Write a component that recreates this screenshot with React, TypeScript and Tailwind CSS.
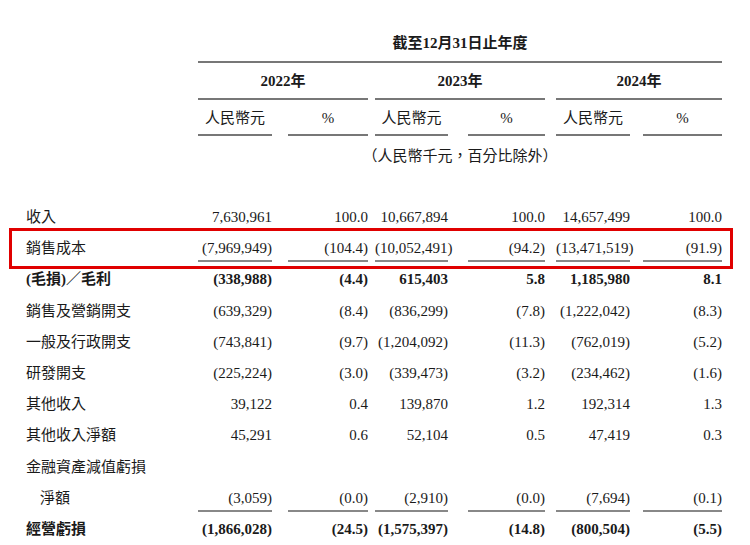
const COLS = [
  "ml-0 w-[74px]",
  "ml-[16px] w-[80px]",
  "ml-[7px] w-[73px]",
  "ml-[20px] w-[77px]",
  "ml-[11px] w-[74px]",
  "ml-[13px] w-[79px]",
];

type Row = { label: string; vals?: string[]; bold?: boolean; line?: boolean; indent?: boolean };

const ROWS: Row[] = [
  { label: "收入", vals: ["7,630,961", "100.0", "10,667,894", "100.0", "14,657,499", "100.0"] },
  { label: "銷售成本", vals: ["(7,969,949)", "(104.4)", "(10,052,491)", "(94.2)", "(13,471,519)", "(91.9)"], line: true },
  { label: "(毛損)／毛利", vals: ["(338,988)", "(4.4)", "615,403", "5.8", "1,185,980", "8.1"], bold: true },
  { label: "銷售及營銷開支", vals: ["(639,329)", "(8.4)", "(836,299)", "(7.8)", "(1,222,042)", "(8.3)"] },
  { label: "一般及行政開支", vals: ["(743,841)", "(9.7)", "(1,204,092)", "(11.3)", "(762,019)", "(5.2)"] },
  { label: "研發開支", vals: ["(225,224)", "(3.0)", "(339,473)", "(3.2)", "(234,462)", "(1.6)"] },
  { label: "其他收入", vals: ["39,122", "0.4", "139,870", "1.2", "192,314", "1.3"] },
  { label: "其他收入淨額", vals: ["45,291", "0.6", "52,104", "0.5", "47,419", "0.3"] },
  { label: "金融資產減值虧損" },
  { label: "淨額", vals: ["(3,059)", "(0.0)", "(2,910)", "(0.0)", "(7,694)", "(0.1)"], line: true, indent: true },
  { label: "經營虧損", vals: ["(1,866,028)", "(24.5)", "(1,575,397)", "(14.8)", "(800,504)", "(5.5)"], bold: true },
];

export default function App() {
  return (
    <div
      className="w-[750px] h-[545px] bg-white text-[#1a1a1a] text-[15px] relative overflow-hidden"
      style={{ fontFamily: '"Liberation Serif", "Noto Sans CJK TC", serif' }}
    >
      <div className="pl-[198px] pt-[33px] w-[722px]">
        <div className="text-center font-bold leading-[20px] pb-[8px]">截至12月31日止年度</div>
        <div className="h-[2px] bg-[#777]" />
        <div className="flex pt-[8px]">
          {["2022年", "2023年", "2024年"].map((y, i) => (
            <div key={y} className={i === 0 ? "w-[170px]" : i === 1 ? "ml-[7px] w-[170px]" : "ml-[11px] w-[166px]"}>
              <div className="text-center font-bold leading-[20px] pb-[7px]">{y}</div>
              <div className="h-[2px] bg-[#777]" />
            </div>
          ))}
        </div>
        <div className="flex pt-[8px]">
          {COLS.map((c, i) => (
            <div key={i} className={c}>
              <div className="text-center leading-[20px] pb-[6px]">{i % 2 === 0 ? "人民幣元" : "%"}</div>
              <div className="h-[2px] bg-[#777]" />
            </div>
          ))}
        </div>
        <div className="text-center leading-[20px] pt-[10px]">（人民幣千元，百分比除外）</div>
      </div>

      <div className="pt-[40px] pl-[26px]">
        {ROWS.map((r) => (
          <div key={r.label} className={`flex h-[31.2px] items-start ${r.bold ? "font-bold" : ""}`}>
            <div className={`w-[172px] leading-[20px] pt-[1px] ${r.indent ? "pl-[14px]" : ""}`}>{r.label}</div>
            {r.vals &&
              COLS.map((c, i) => (
                <div key={i} className={c}>
                  <div className="text-right leading-[20px] pt-[1px] pb-[2px]">{r.vals![i]}</div>
                  {r.line && <div className="h-[2px] bg-[#888]" />}
                </div>
              ))}
          </div>
        ))}
      </div>

      <div className="absolute left-[9px] top-[228px] w-[724px] h-[41px] border-[3px] border-[#e00000]" />
    </div>
  );
}
